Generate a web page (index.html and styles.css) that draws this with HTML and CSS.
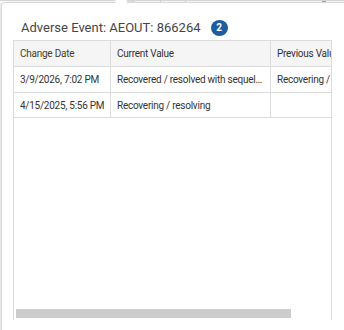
FILE: index.html
```html
<!DOCTYPE html>
<html>
<head>
<meta charset="utf-8">
<link rel="stylesheet" href="styles.css">
</head>
<body>
<div class="backdrop">
  <div class="bar">
    <span class="cell c1"></span>
    <span class="cell c2"></span>
    <span class="cell c3"></span>
    <span class="cell c4"></span>
    <span class="cell c5"></span>
    <span class="mark"></span>
  </div>
</div>
<div class="popover">
  <span class="arrow"></span>
  <div class="title">
    <span class="title-text">Adverse Event: AEOUT: 866264</span>
    <span class="badge">2</span>
  </div>
  <div class="grid">
    <div class="row head">
      <div class="td col1 sorted">Change Date</div>
      <div class="td col2">Current Value</div>
      <div class="td col3">Previous Value</div>
    </div>
    <div class="row">
      <div class="td col1">3/9/2026, 7:02 PM</div>
      <div class="td col2">Recovered / resolved with sequelae</div>
      <div class="td col3">Recovering / resolving</div>
    </div>
    <div class="row short">
      <div class="td col1">4/15/2025, 5:56 PM</div>
      <div class="td col2">Recovering / resolving</div>
      <div class="td col3"></div>
    </div>
    <div class="scroll-thumb"></div>
  </div>
</div>
</body>
</html>
```
FILE: styles.css
```css
html, body {
  margin: 0;
  padding: 0;
}
body {
  width: 344px;
  height: 330px;
  overflow: hidden;
  position: relative;
  font-family: Roboto, "Liberation Sans", sans-serif;
  background: #fff;
}
.backdrop {
  height: 330px;
  background: #f1f1f1;
}
.bar {
  display: flex;
  height: 2px;
  border-top: 1px solid #d9d9d9;
  background: #fbfbfb;
}
.cell {
  display: block;
  height: 2px;
}
.c1 { width: 123px; }
.c2 { width: 10px; background: #e6e6e6; border-right: 1px solid #c8c8c8; }
.c3 { width: 26px; border-right: 1px solid #d0d0d0; }
.c4 { width: 24px; border-right: 1px solid #d0d0d0; }
.c5 { width: 136px; }
.mark { display: block; width: 4px; height: 2px; background: #d99a55; }

.popover {
  position: absolute;
  left: 1px;
  top: 2px;
  width: 370px;
  height: 345px;
  box-sizing: border-box;
  border: 1px solid #dadada;
  border-radius: 4px;
  background: #fff;
  box-shadow: 0 0 3px rgba(0,0,0,0.10);
}
.arrow {
  position: absolute;
  left: 114px;
  top: -7px;
  width: 9px;
  height: 9px;
  background: #fff;
  border-left: 1px solid #dadada;
  border-top: 1px solid #dadada;
  transform: rotate(45deg);
}
.title {
  display: flex;
  align-items: center;
  margin: 15px 0 0 19px;
  height: 19px;
}
.title-text {
  font-size: 13px;
  line-height: 16px;
  color: #454545;
}
.badge {
  margin-left: 10px;
  width: 17px;
  height: 16px;
  border-radius: 50%;
  background: #1d5c9e;
  color: #fff;
  font-size: 10px;
  font-weight: bold;
  display: flex;
  align-items: center;
  justify-content: center;
}
.grid {
  position: relative;
  margin: 3px 0 0 11px;
  width: 319px;
  height: 280px;
  box-sizing: border-box;
  border: 1px solid #dcdcdc;
  border-bottom: none;
  overflow: hidden;
}
.row {
  display: flex;
  height: 26px;
  box-sizing: border-box;
  border-bottom: 1px solid #dcdcdc;
  width: 400px;
}
.row.short { height: 25px; }
.head { background: #f5f5f5; }
.td {
  box-sizing: border-box;
  display: flex;
  align-items: center;
  padding: 0 6px;
  font-size: 10px;
  letter-spacing: -0.25px;
  color: #333;
  white-space: nowrap;
  overflow: hidden;
  border-right: 1px solid #dcdcdc;
}
.td.col1 { width: 97px; }
.td.col2 { width: 160px; }
.td.col3 { width: 140px; }
.row .col2 { text-overflow: ellipsis; display: block; line-height: 25px; }
.sorted { color: #4b3c1c; }
.scroll-thumb {
  position: absolute;
  left: 2px;
  top: 268px;
  width: 275px;
  height: 9px;
  background: #cdcdcd;
}
```
